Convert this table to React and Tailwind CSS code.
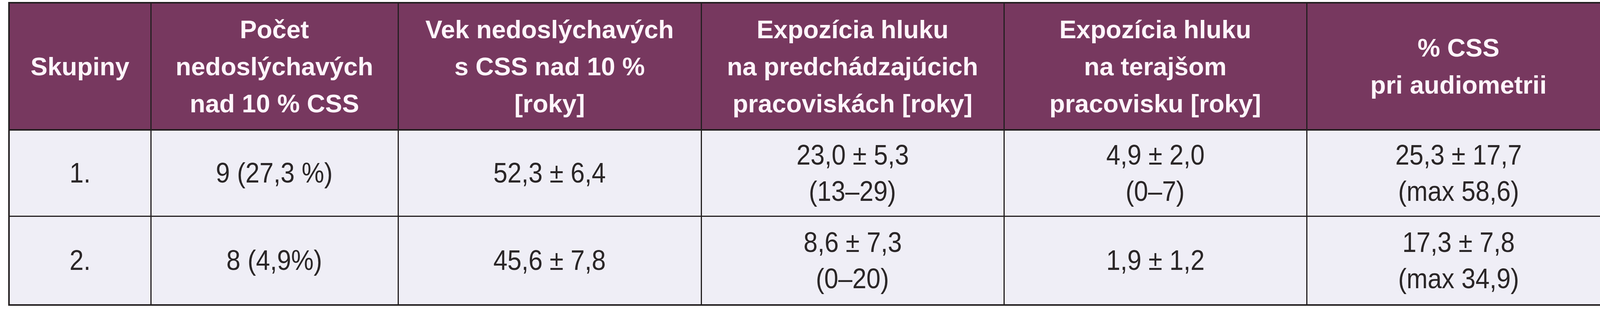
const head = [
  ["Skupiny"],
  ["Počet", "nedoslýchavých", "nad 10 % CSS"],
  ["Vek nedoslýchavých", "s CSS nad 10 %", "[roky]"],
  ["Expozícia hluku", "na predchádzajúcich", "pracoviskách [roky]"],
  ["Expozícia hluku", "na terajšom", "pracovisku [roky]"],
  ["% CSS", "pri audiometrii"],
];

const rows = [
  [["1."], ["9 (27,3 %)"], ["52,3 ± 6,4"], ["23,0 ± 5,3", "(13–29)"], ["4,9 ± 2,0", "(0–7)"], ["25,3 ± 17,7", "(max 58,6)"]],
  [["2."], ["8 (4,9%)"], ["45,6 ± 7,8"], ["8,6 ± 7,3", "(0–20)"], ["1,9 ± 1,2"], ["17,3 ± 7,8", "(max 34,9)"]],
];

const widths = ["w-[363px]", "w-[633px]", "w-[776px]", "w-[775px]", "w-[775px]", "w-[778px]"];

export default function App() {
  return (
    <div className="bg-white w-[4156px] h-[800px] pt-[5px] pl-[21px]">
      <table className="table-fixed border-collapse border-[4px] border-[#231f20] w-[4102px]">
        <colgroup>
          {widths.map((w, i) => <col key={i} className={w} />)}
        </colgroup>
        <thead>
          <tr className="h-[326px]">
            {head.map((lines, i) => (
              <th key={i} className="bg-[#77385f] border-x-[3px] border-b-[4px] border-[#231f20] text-center align-middle p-0 font-bold text-[#fff5fb] text-[65px] leading-[95px] font-['Liberation_Sans',Arial,sans-serif]">
                {lines.map((line) => <div key={line}>{line}</div>)}
              </th>
            ))}
          </tr>
        </thead>
        <tbody>
          {rows.map((row, r) => (
            <tr key={r} className={r === 0 ? "h-[221px]" : "h-[228px]"}>
              {row.map((lines, i) => (
                <td key={i} className="bg-[#efeef6] border-[3px] border-[#231f20] text-center align-middle p-0 text-[#2a2627] text-[72px] leading-[93px] font-['Liberation_Sans',Arial,sans-serif]">
                  {lines.map((line) => (
                    <div key={line}>
                      <span className="inline-block scale-x-[0.9] whitespace-nowrap">{line}</span>
                    </div>
                  ))}
                </td>
              ))}
            </tr>
          ))}
        </tbody>
      </table>
    </div>
  );
}
